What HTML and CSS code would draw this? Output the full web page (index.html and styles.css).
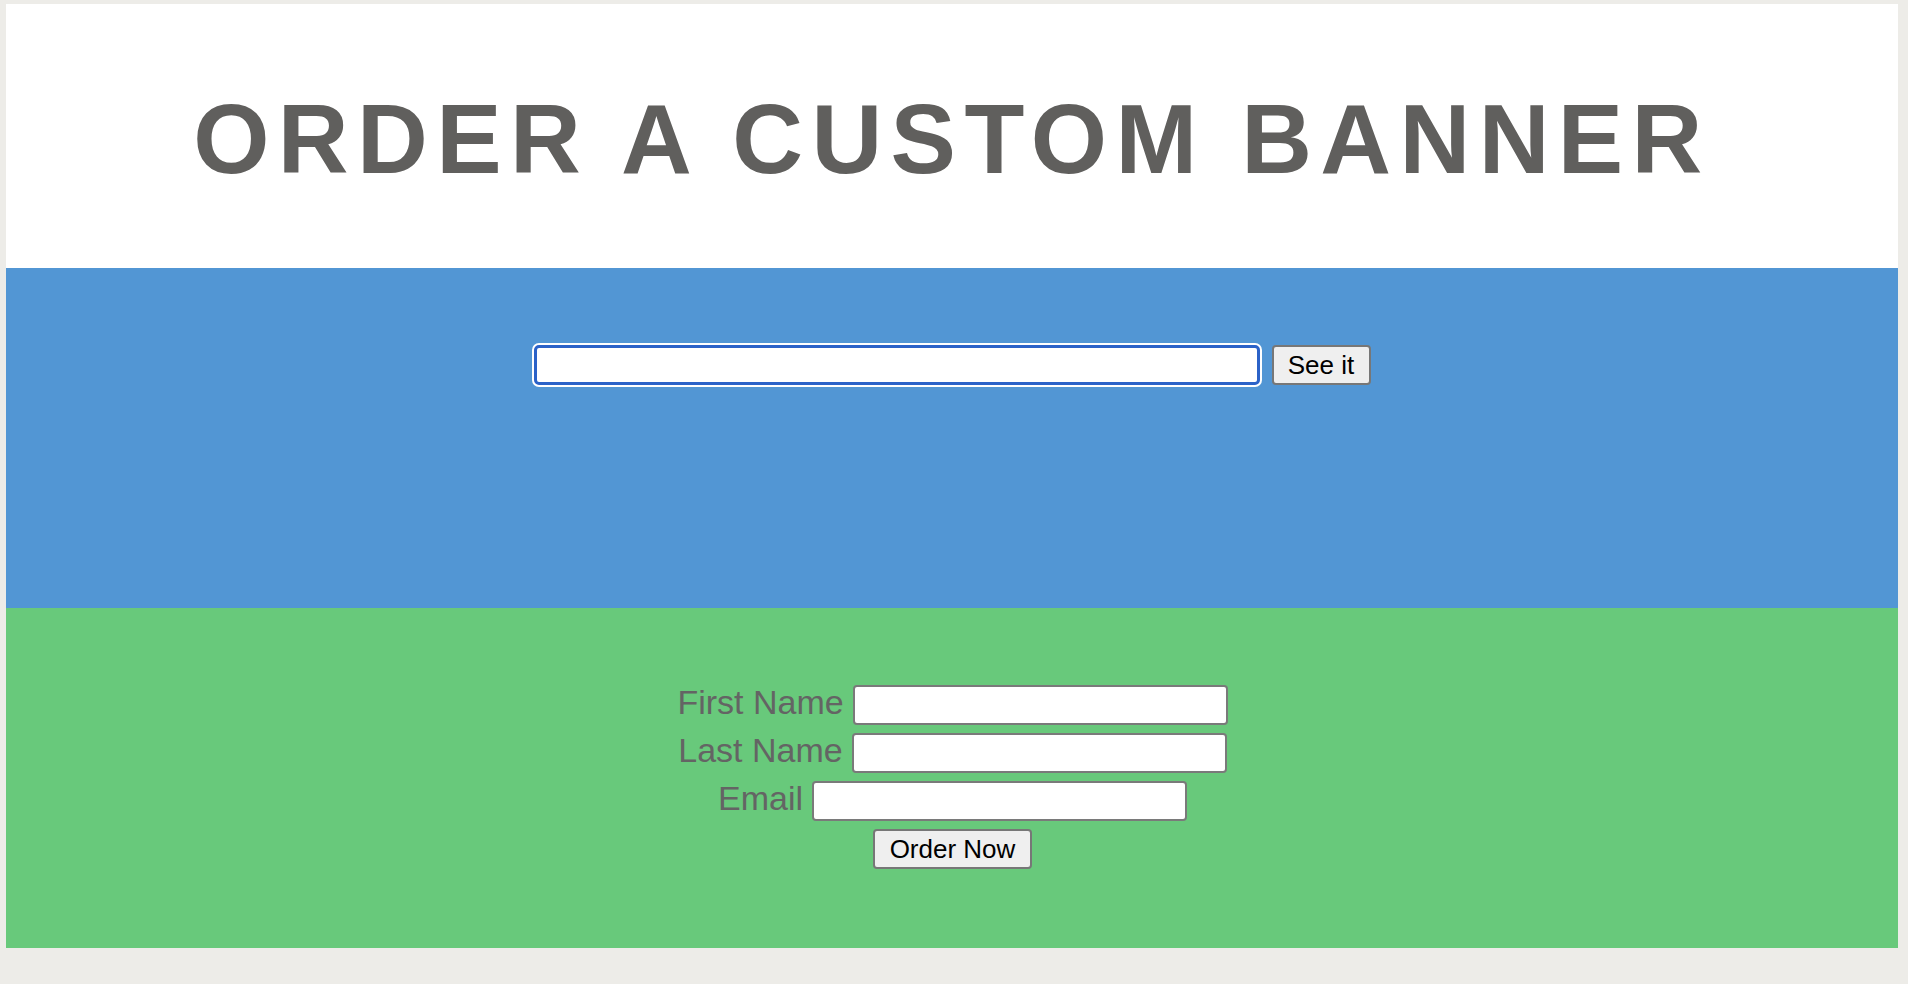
FILE: index.html
```html
<!DOCTYPE html>
<html lang="en">
<head>
<meta charset="utf-8">
<title>Order a Custom Banner</title>
<link rel="stylesheet" href="styles.css">
</head>
<body>
<div class="page">
  <header class="hero">
    <h1 class="hero-title">ORDER A CUSTOM BANNER</h1>
  </header>
  <section class="preview">
    <form class="preview-row">
      <input class="preview-input" type="text">
      <button class="btn btn-see" type="button">See it</button>
    </form>
  </section>
  <section class="order">
    <form class="order-form">
      <div class="order-row"><label class="order-label">First Name</label><input class="order-input" type="text"></div>
      <div class="order-row"><label class="order-label">Last Name</label><input class="order-input" type="text"></div>
      <div class="order-row"><label class="order-label">Email</label><input class="order-input" type="email"></div>
      <div class="order-row"><button class="btn btn-order" type="button">Order Now</button></div>
    </form>
  </section>
</div>
</body>
</html>
```

FILE: styles.css
```css
* { box-sizing: border-box; }

html, body {
  margin: 0;
  padding: 0;
  background: #edece8;
}

body {
  padding: 4px 10px 0 6px;
  font-family: "Liberation Sans", Arial, Helvetica, sans-serif;
}

.page {
  width: 1892px;
}

.hero {
  height: 264px;
  background: #ffffff;
  padding-top: 86px;
}

.hero-title {
  margin: 0;
  font-size: 98px;
  line-height: 98px;
  font-weight: bold;
  letter-spacing: 8.4px;
  color: #605f5d;
  text-align: center;
}

.preview {
  height: 340px;
  background: #5296d4;
  padding-top: 77px;
}

.preview-row {
  margin: 0;
  display: flex;
  justify-content: center;
  align-items: center;
  gap: 12px;
}

.preview-input {
  width: 726px;
  height: 40px;
  margin: 0;
  border: 3px solid #2b62c8;
  border-radius: 5px;
  background: #ffffff;
  box-shadow: 0 0 0 2px #ffffff;
  outline: none;
  font-size: 24px;
  padding: 0 4px;
}

.btn {
  height: 40px;
  margin: 0;
  border: 2px solid #777777;
  border-radius: 4px;
  background: #efefef;
  color: #000000;
  font-family: "Liberation Sans", Arial, Helvetica, sans-serif;
  font-size: 26px;
  line-height: 1;
  cursor: pointer;
}

.btn-see {
  width: 99px;
  padding: 0;
}

.btn-order {
  width: 159px;
  padding: 0;
}

.order {
  height: 340px;
  background: #68c97b;
  padding-top: 77px;
}

.order-form {
  margin: 0;
  display: flex;
  flex-direction: column;
  gap: 8px;
}

.order-row {
  display: flex;
  justify-content: center;
  align-items: center;
  gap: 9px;
  height: 40px;
  padding-left: 1px;
}

.order-label {
  font-size: 34px;
  line-height: 34px;
  color: #646464;
  margin-bottom: 6px;
}

.order-input {
  width: 375px;
  height: 40px;
  margin: 0;
  border: 2px solid #7a7a7a;
  border-radius: 4px;
  background: #ffffff;
  font-size: 24px;
  padding: 0 4px;
}
```
